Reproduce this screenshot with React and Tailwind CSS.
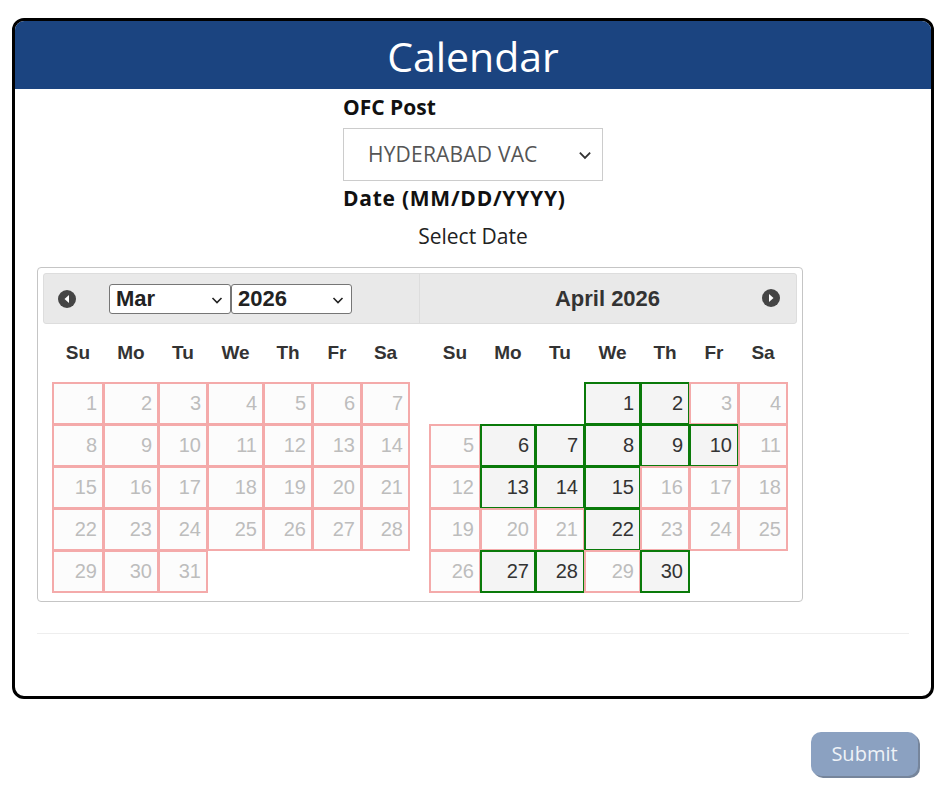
import React from 'react';

const MARCH_W = ['w-[52px]', 'w-[56px]', 'w-[50px]', 'w-[57px]', 'w-[50px]', 'w-[50px]', 'w-[49px]'];
const APRIL_W = ['w-[52px]', 'w-[56px]', 'w-[50px]', 'w-[57px]', 'w-[50px]', 'w-[50px]', 'w-[50px]'];
const DAYS = ['Su', 'Mo', 'Tu', 'We', 'Th', 'Fr', 'Sa'];
const OPEN_APRIL = [1, 2, 6, 7, 8, 9, 10, 13, 14, 15, 22, 27, 28, 30];

function weeks(startDay, total) {
  const cells = Array(startDay).fill(null);
  for (let d = 1; d <= total; d++) cells.push(d);
  const rows = [];
  for (let i = 0; i < cells.length; i += 7) rows.push(cells.slice(i, i + 7));
  return rows;
}

function NavIcon({ dir }) {
  return (
    <svg width="20" height="20" viewBox="0 0 20 20">
      <circle cx="10" cy="10" r="9" fill="#454545" />
      {dir === 'prev' ? (
        <polygon points="12,6 12,14 7.5,10" fill="#fff" />
      ) : (
        <polygon points="8,6 8,14 12.5,10" fill="#fff" />
      )}
    </svg>
  );
}

function Chevron({ size = 14, color = '#222' }) {
  return (
    <svg width={size} height={size} viewBox="0 0 14 14" fill="none">
      <path d="M2.5 5 L7 9.5 L11.5 5" stroke={color} strokeWidth="1.6" />
    </svg>
  );
}

function MiniSelect({ value, width }) {
  return (
    <div className={`relative flex items-center h-[30px] border border-[#767676] rounded-[3px] bg-white pl-[6px] ${width}`}>
      <span className="text-[22px] font-bold text-[#222] leading-none">{value}</span>
      <span className="absolute right-[6px] top-[8px]"><Chevron /></span>
    </div>
  );
}

function Month({ rows, widths, open, pad }) {
  return (
    <div className={pad}>
      <div className="flex h-[58px] items-center">
        {DAYS.map((d, i) => (
          <div key={d} className={`${widths[i]} -mr-px text-center font-bold text-[19px] text-[#333]`}>{d}</div>
        ))}
      </div>
      <div>
        {rows.map((row, r) => (
          <div key={r} className="flex -mb-px">
            {DAYS.map((_, i) => {
              const d = row[i];
              if (!d) return <div key={i} className={`${widths[i]} h-[43px] -mr-px`} />;
              const on = open(d);
              return (
                <div
                  key={i}
                  className={`${widths[i]} h-[43px] -mr-px border-2 flex items-center justify-end pr-[5px] pb-[2px] text-[20px] ${
                    on ? 'border-[#0a7a0a] bg-[#f4f4f4] text-[#333]' : 'border-[#f4aaaa] bg-[#fcfcfc] text-[#bdbdbd]'
                  }`}
                >
                  {d}
                </div>
              );
            })}
          </div>
        ))}
      </div>
    </div>
  );
}

export default function App() {
  return (
    <div className="w-[949px] min-h-[791px] bg-white pt-[18px] px-[12px] font-['Open_Sans',sans-serif]">
      <div className="w-[922px] h-[681px] border-[3px] border-black rounded-[12px] overflow-hidden flex flex-col">
        <div className="h-[68px] bg-[#1b4480] flex items-center justify-center">
          <h1 className="text-white text-[41px] leading-none pt-[2px]">Calendar</h1>
        </div>

        <div className="px-[22px]">
          <div className="w-[260px] mx-auto pt-[4px]">
            <div className="font-bold text-[21px] text-[#111] leading-[28px]">OFC Post</div>
            <div className="relative mt-[7px] h-[53px] border border-[#cccccc] flex items-center pl-[24px]">
              <span className="text-[21px] text-[#555] tracking-[0.2px]">HYDERABAD VAC</span>
              <span className="absolute right-[9px] top-[18px]"><Chevron size={16} color="#333" /></span>
            </div>
            <div className="font-bold text-[21px] text-[#111] leading-[28px] mt-[3px] tracking-[0.75px]">Date (MM/DD/YYYY)</div>
          </div>
          <div className="text-center text-[21px] text-[#222] leading-[28px] mt-[10px]">Select Date</div>

          <div className="mt-[17px] w-[766px] h-[335px] border border-[#c5c5c5] rounded-[4px] p-[5px] font-['Liberation_Sans',Arial,sans-serif]">
            <div className="flex h-[51px] bg-[#e9e9e9] border border-[#dddddd] rounded-[3px]">
              <div className="w-[376px] flex items-center border-r border-[#dddddd]">
                <div className="ml-[13px] mr-[32px] flex"><NavIcon dir="prev" /></div>
                <MiniSelect value="Mar" width="w-[122px]" />
                <MiniSelect value="2026" width="w-[121px]" />
              </div>
              <div className="flex-1 relative flex items-center justify-center">
                <span className="text-[22px] font-bold text-[#333] mr-[1px]">April 2026</span>
                <span className="absolute right-[15px] top-[14px] flex"><NavIcon dir="next" /></span>
              </div>
            </div>
            <div className="flex">
              <Month rows={weeks(0, 31)} widths={MARCH_W} open={() => false} pad="w-[376px] pl-[9px]" />
              <Month rows={weeks(3, 30)} widths={APRIL_W} open={(d) => OPEN_APRIL.includes(d)} pad="pl-[10px]" />
            </div>
          </div>

          <div className="mt-[31px] h-px bg-[#eeeeee]" />
        </div>
      </div>

      <div className="flex justify-end pr-[19px] mt-[33px]">
        <button className="w-[107px] h-[44px] rounded-[10px] bg-[#8ba1c1] shadow-[2px_2px_0_#76859b] text-[20px] text-[#eef2f7]">
          Submit
        </button>
      </div>
    </div>
  );
}
